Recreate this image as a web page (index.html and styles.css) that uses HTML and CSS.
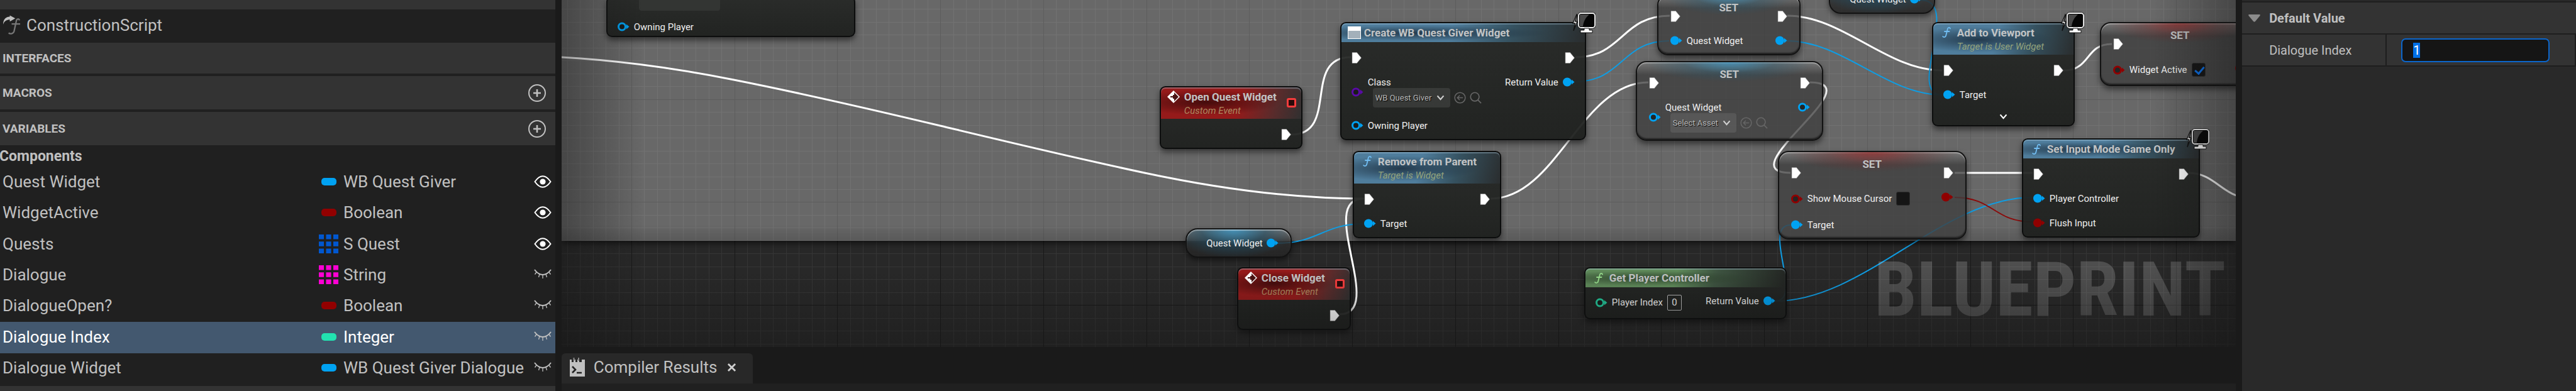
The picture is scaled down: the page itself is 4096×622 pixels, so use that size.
FILE: index.html
```html
<!DOCTYPE html>
<html lang="en">
<head>
<meta charset="utf-8">
<title>Blueprint Editor</title>
<link rel="stylesheet" href="styles.css">
</head>
<body>
<svg class="defs" aria-hidden="true">
  <symbol id="exec" viewBox="0 0 16 18"><path d="M1 .5h7.500l7 8.500-7 8.500H1z" fill="#fff" stroke="#8a8a8a" stroke-width=".6"/></symbol>
  <symbol id="pin" viewBox="0 0 19 15"><circle cx="7" cy="7.500" r="7"/><path d="M14 3.500 18.500 7.500 14 11.500z"/></symbol>
  <symbol id="ring" viewBox="0 0 19 15"><circle cx="7" cy="7.500" r="5.500" fill="#171a19" fill-opacity=".75" stroke="currentColor" stroke-width="3"/><path d="M14 3.500 18.500 7.500 14 11.500z"/></symbol>
  <symbol id="event" viewBox="0 0 20 20"><path d="M10 0 20 10 10 20 0 10z" fill="#fff"/><path d="M11 3 18 10 11 17v-4H8V7h3z" fill="#4a1212"/><path d="M8 5v10" stroke="#fff" stroke-width="2"/><path d="M5 9h5v2H5z" fill="#4a1212"/></symbol>
  <symbol id="func" viewBox="0 0 14 17"><path d="M13 2.500C12.500.5 9.500.2 8.800 3L6.200 13.500C5.600 16.300 2.500 16.800 1.200 15M4 7h7.500" fill="none" stroke="currentColor" stroke-width="1.800" stroke-linecap="round"/></symbol>
  <symbol id="chev" viewBox="0 0 14 10"><path d="M1.500 1.500 7 8l5.500-6.500" fill="none" stroke="currentColor" stroke-width="2.400"/></symbol>
  <symbol id="back" viewBox="0 0 20 20"><g fill="none" stroke="currentColor" stroke-width="1.600"><circle cx="10" cy="10" r="8.800"/><path d="M15 10H6M9.500 6 5.500 10l4 4"/></g></symbol>
  <symbol id="find" viewBox="0 0 20 20"><g fill="none" stroke="currentColor" stroke-width="1.800"><circle cx="8.500" cy="8.500" r="7.200"/><path d="M13.500 13.500 19 19"/></g></symbol>
  <symbol id="client" viewBox="0 0 38 34"><path d="M8 4 2 18h3.500L3 30l6-15H5.500L9 5z" fill="#fff" stroke="#111" stroke-width="1.400"/><rect x="11" y="2" width="26" height="23" rx="4" fill="#050505" stroke="#111" stroke-width="3.500"/><rect x="11" y="2" width="26" height="23" rx="4" fill="#050505" stroke="#f4f4f4" stroke-width="1.800"/><path d="M13 4h15C22 9 19 15 18 23h-5z" fill="#484848"/><path d="M20 26h8v3h5v4H14v-4h6z" fill="#fff" stroke="#111"/></symbol>
  <symbol id="plus" viewBox="0 0 28 28"><g fill="none" stroke="currentColor" stroke-width="2"><circle cx="14" cy="14" r="13"/><path d="M14 8v12M8 14h12" stroke-width="2.600"/></g></symbol>
  <symbol id="eye" viewBox="0 0 28 20"><path d="M1.500 10C6 3.500 10 1.200 14 1.200S22 3.500 26.500 10C22 16.500 18 18.800 14 18.800S6 16.500 1.500 10z" fill="none" stroke="#fff" stroke-width="2"/><circle cx="14" cy="10" r="4.600" fill="#fff"/></symbol>
  <symbol id="lid" viewBox="0 0 28 20"><path d="M1 2C5 7.500 9 10 14 10S23 7.500 27 2" fill="none" stroke="#c0c0c0" stroke-width="2"/><path d="M4 6 1.500 9.500M9 9 7.500 14M14 10v6M19 9l1.500 5M24 6l2.500 3.500" fill="none" stroke="#c0c0c0" stroke-width="1.300"/></symbol>
  <symbol id="array" viewBox="0 0 31 30"><path d="M0 0h8v7.500H0zM11.500 0h8v7.500h-8zM23 0h8v7.500h-8zM0 11.200h8v7.500H0zM11.500 11.200h8v7.500h-8zM23 11.200h8v7.500h-8zM0 22.500h8V30H0zM11.500 22.500h8V30h-8zM23 22.500h8V30h-8z" fill="currentColor"/></symbol>
</svg>

<div class="editor">
  <aside class="blueprint">
    <div class="sliver"></div>
    <div class="script-row">
      <svg class="script-icon" viewBox="0 0 30 32"><path d="M1 15C1 6 6 2 12 2V0l9 5-9 5V7C7 7 3 9 1 15z" fill="#c0c0c0"/><path d="M28 8C27 5 23 5 22.500 10L19 26c-1 4-6 5-9 3M15 14h14" fill="none" stroke="#777" stroke-width="2.400"/></svg>
      <span>ConstructionScript</span>
    </div>
    <h2 class="section section-short">INTERFACES</h2>
    <h2 class="section">MACROS<button class="icon-button" aria-label="Add macro"><svg class="plus"><use href="#plus"/></svg></button></h2>
    <h2 class="section">VARIABLES<button class="icon-button" aria-label="Add variable"><svg class="plus"><use href="#plus"/></svg></button></h2>
    <h3 class="components">Components</h3>
    <ul class="variables">
      <li><span>Quest Widget</span><i class="pill object"></i><span>WB Quest Giver</span><button class="icon-button" aria-label="Hide Quest Widget"><svg class="eye"><use href="#eye"/></svg></button></li>
      <li><span>WidgetActive</span><i class="pill bool"></i><span>Boolean</span><button class="icon-button" aria-label="Hide WidgetActive"><svg class="eye"><use href="#eye"/></svg></button></li>
      <li><span>Quests</span><svg class="array struct"><use href="#array"/></svg><span>S Quest</span><button class="icon-button" aria-label="Hide Quests"><svg class="eye"><use href="#eye"/></svg></button></li>
      <li><span>Dialogue</span><svg class="array string"><use href="#array"/></svg><span>String</span><button class="icon-button" aria-label="Show Dialogue"><svg class="eye"><use href="#lid"/></svg></button></li>
      <li><span>DialogueOpen?</span><i class="pill bool"></i><span>Boolean</span><button class="icon-button" aria-label="Show DialogueOpen?"><svg class="eye"><use href="#lid"/></svg></button></li>
      <li class="selected"><span>Dialogue Index</span><i class="pill int"></i><span>Integer</span><button class="icon-button" aria-label="Show Dialogue Index"><svg class="eye"><use href="#lid"/></svg></button></li>
      <li><span>Dialogue Widget</span><i class="pill object"></i><span>WB Quest Giver Dialogue</span><button class="icon-button" aria-label="Show Dialogue Widget"><svg class="eye"><use href="#lid"/></svg></button></li>
    </ul>
    <div class="foot"></div>
  </aside>

  <main class="center">
    <section class="graph" aria-label="Event graph">
      <svg class="grid" width="100%" height="100%">
        <defs><pattern id="cells" x="111" y="-6" width="655" height="655" patternUnits="userSpaceOnUse">
          <path class="fine" d="M20.500 0v655M41.500 0v655M61.500 0v655M82.500 0v655M102.500 0v655M123.500 0v655M143.500 0v655M184.500 0v655M205.500 0v655M225.500 0v655M246.500 0v655M266.500 0v655M287.500 0v655M307.500 0v655M348.500 0v655M368.500 0v655M389.500 0v655M409.500 0v655M430.500 0v655M450.500 0v655M471.500 0v655M512.500 0v655M532.500 0v655M553.500 0v655M573.500 0v655M594.500 0v655M614.500 0v655M635.500 0v655"/>
          <path class="fine" d="M0 20.500h655M0 41.500h655M0 61.500h655M0 82.500h655M0 102.500h655M0 123.500h655M0 143.500h655M0 184.500h655M0 205.500h655M0 225.500h655M0 246.500h655M0 266.500h655M0 287.500h655M0 307.500h655M0 348.500h655M0 368.500h655M0 389.500h655M0 409.500h655M0 430.500h655M0 450.500h655M0 471.500h655M0 512.500h655M0 532.500h655M0 553.500h655"/>
          <path class="bold" d="M.5 0v655M164.500 0v655M327.500 0v655M491.500 0v655M0 .5h655M0 164.500h655M0 327.500h655M0 491.500h655"/>
        </pattern></defs>
        <rect width="100%" height="100%" fill="url(#cells)"/>
      </svg>
      <div class="comment"></div>
      <svg class="wires" viewBox="893 0 2663 552" fill="none">
        <g stroke="#fff" stroke-width="3">
          <path d="M893 91C984 96 1076 109 1167 127S1386 174 1495 200 1712 252 1820 275 2053 316 2169 316"/>
          <path d="M2053 214C2130 214 2070 91 2148 91"/>
          <path d="M2505 91C2580 91 2578 25 2655 25"/>
          <path d="M2842 25C2930 25 3000 112 3088 112"/>
          <path d="M2370 316C2475 316 2514 131 2621 131"/>
          <path d="M2878 131C2980 131 2745 275 2847 275"/>
          <path d="M3281 112C3325 112 3315 70 3358 70"/>
          <path d="M3108 275H3232"/>
          <path d="M3480 275C3515 275 3530 302 3556 311"/>
          <path d="M2130 500C2205 500 2092 316 2168 316"/>
        </g>
        <g stroke="#0f9de3" stroke-width="2">
          <path d="M2504 130C2580 130 2578 65 2654 65"/>
          <path d="M2841 65C2930 65 3000 151 3088 151"/>
          <path d="M2032 387C2095 387 2105 356 2168 356"/>
          <path d="M3054 0C3120 0 3030 151 3088 151"/>
          <path d="M2822 479C2965 479 3088 314 3232 314"/>
          <path d="M2822 479C2870 479 2800 358 2847 358"/>
        </g>
        <path d="M3108 314C3170 314 3170 353 3232 353" stroke="#8b0a0a" stroke-width="2"/>
      </svg>

      <article class="node n-partial">
        <div class="partial-field"></div>
        <div class="row"><svg class="pin obj"><use href="#ring"/></svg>Owning Player</div>
      </article>

      <article class="node n-open">
        <header class="head event"><svg class="event-icon"><use href="#event"/></svg><div><h4>Open Quest Widget</h4><em>Custom Event</em></div><i class="delegate"></i></header>
        <div class="body"><div class="outs"><div class="row"><svg class="exec"><use href="#exec"/></svg></div></div></div>
      </article>

      <article class="node n-create">
        <header class="head call"><i class="widget-icon"></i><h4>Create WB Quest Giver Widget</h4></header>
        <svg class="client"><use href="#client"/></svg>
        <div class="body">
          <div class="ins">
            <div class="row"><svg class="exec"><use href="#exec"/></svg></div>
            <div class="asset">
              <svg class="pin cls"><use href="#ring"/></svg>
              <div><label for="cls">Class</label>
                <div class="picker"><span class="drop"><select id="cls"><option>WB Quest Giver</option></select><svg class="chev"><use href="#chev"/></svg></span><button class="icon-button dim" aria-label="Use selected"><svg class="tool"><use href="#back"/></svg></button><button class="icon-button dim" aria-label="Browse"><svg class="tool"><use href="#find"/></svg></button></div></div>
            </div>
            <div class="row"><svg class="pin obj"><use href="#ring"/></svg>Owning Player</div>
          </div>
          <div class="outs"><div class="row"><svg class="exec"><use href="#exec"/></svg></div><div class="row">Return Value<svg class="pin obj"><use href="#pin"/></svg></div></div>
        </div>
      </article>

      <article class="node n-remove">
        <header class="head call"><svg class="func"><use href="#func"/></svg><div><h4>Remove from Parent</h4><em>Target is Widget</em></div></header>
        <div class="body">
          <div class="ins"><div class="row"><svg class="exec"><use href="#exec"/></svg></div><div class="row"><svg class="pin obj"><use href="#pin"/></svg>Target</div></div>
          <div class="outs"><div class="row"><svg class="exec"><use href="#exec"/></svg></div></div>
        </div>
      </article>

      <article class="node var n-var">Quest Widget<svg class="pin obj"><use href="#pin"/></svg></article>

      <article class="node n-close">
        <header class="head event"><svg class="event-icon"><use href="#event"/></svg><div><h4>Close Widget</h4><em>Custom Event</em></div><i class="delegate"></i></header>
        <div class="body"><div class="outs"><div class="row"><svg class="exec"><use href="#exec"/></svg></div></div></div>
      </article>

      <article class="node set blue n-set1">
        <h4>SET</h4>
        <div class="body">
          <div class="ins"><div class="row"><svg class="exec"><use href="#exec"/></svg></div><div class="row"><svg class="pin obj"><use href="#pin"/></svg>Quest Widget</div></div>
          <div class="outs"><div class="row"><svg class="exec"><use href="#exec"/></svg></div><div class="row"><svg class="pin obj"><use href="#pin"/></svg></div></div>
        </div>
      </article>

      <article class="node set blue n-set2">
        <h4>SET</h4>
        <div class="body">
          <div class="ins"><div class="row"><svg class="exec"><use href="#exec"/></svg></div>
            <div class="asset">
              <svg class="pin obj"><use href="#ring"/></svg>
              <div><label for="asset">Quest Widget</label>
                <div class="picker"><span class="drop drop-small"><select id="asset"><option>Select Asset</option></select><svg class="chev"><use href="#chev"/></svg></span><button class="icon-button dim" aria-label="Use selected"><svg class="tool"><use href="#back"/></svg></button><button class="icon-button dim" aria-label="Browse"><svg class="tool"><use href="#find"/></svg></button></div></div>
            </div>
          </div>
          <div class="outs"><div class="row"><svg class="exec"><use href="#exec"/></svg></div><div class="row"><svg class="pin obj"><use href="#ring"/></svg></div></div>
        </div>
      </article>

      <article class="node var n-var2">Quest Widget<svg class="pin obj"><use href="#pin"/></svg></article>

      <article class="node n-add">
        <header class="head call"><svg class="func"><use href="#func"/></svg><div><h4>Add to Viewport</h4><em>Target is User Widget</em></div></header>
        <svg class="client"><use href="#client"/></svg>
        <div class="body">
          <div class="ins"><div class="row"><svg class="exec"><use href="#exec"/></svg></div><div class="row"><svg class="pin obj"><use href="#pin"/></svg>Target</div></div>
          <div class="outs"><div class="row"><svg class="exec"><use href="#exec"/></svg></div></div>
        </div>
        <button class="icon-button expand" aria-label="Show more pins"><svg class="chev"><use href="#chev"/></svg></button>
      </article>

      <article class="node set red n-set4">
        <h4>SET</h4>
        <div class="body">
          <div class="ins"><div class="row"><svg class="exec"><use href="#exec"/></svg></div><div class="row tall"><svg class="pin boolean"><use href="#ring"/></svg><label for="active">Widget Active</label><input type="checkbox" id="active" checked></div></div>
          <div class="outs"><div class="row"><svg class="exec"><use href="#exec"/></svg></div><div class="row"><svg class="pin boolean"><use href="#pin"/></svg></div></div>
        </div>
      </article>

      <article class="node set red n-set3">
        <h4>SET</h4>
        <div class="body">
          <div class="ins"><div class="row"><svg class="exec"><use href="#exec"/></svg></div><div class="row tall"><svg class="pin boolean"><use href="#ring"/></svg><label for="cursor">Show Mouse Cursor</label><input type="checkbox" id="cursor"></div><div class="row"><svg class="pin obj"><use href="#pin"/></svg>Target</div></div>
          <div class="outs"><div class="row"><svg class="exec"><use href="#exec"/></svg></div><div class="row"><svg class="pin boolean"><use href="#pin"/></svg></div></div>
        </div>
      </article>

      <article class="node n-input">
        <header class="head call"><svg class="func"><use href="#func"/></svg><h4>Set Input Mode Game Only</h4></header>
        <svg class="client"><use href="#client"/></svg>
        <div class="body">
          <div class="ins"><div class="row"><svg class="exec"><use href="#exec"/></svg></div><div class="row"><svg class="pin obj"><use href="#pin"/></svg>Player Controller</div><div class="row"><svg class="pin boolean"><use href="#pin"/></svg>Flush Input</div></div>
          <div class="outs"><div class="row"><svg class="exec"><use href="#exec"/></svg></div></div>
        </div>
      </article>

      <article class="node n-get">
        <header class="head pure"><svg class="func"><use href="#func"/></svg><h4>Get Player Controller</h4></header>
        <div class="body">
          <div class="ins"><div class="row tall"><svg class="pin integer"><use href="#ring"/></svg><label for="pidx">Player Index</label><input class="number" id="pidx" value="0"></div></div>
          <div class="outs"><div class="row">Return Value<svg class="pin obj"><use href="#pin"/></svg></div></div>
        </div>
      </article>

      <div class="watermark">BLUEPRINT</div>
      <div class="vignette"></div>
    </section>

    <nav class="tabs">
      <div class="tab">
        <svg class="log-icon" viewBox="0 0 24 30"><path d="M0 3h3v4h3V3h3v4h3V3h3v4h4V3h5v27H0z" fill="#c0c0c0"/><path d="M6.500 0v5M14 0v5" stroke="#888" stroke-width="2"/><path d="M4 14l5 5-5 5M11 24h8" fill="none" stroke="#222" stroke-width="2.600"/></svg>
        <span>Compiler Results</span>
        <button class="icon-button close" aria-label="Close tab"><svg viewBox="0 0 14 14"><path d="M1 1l12 12M13 1 1 13" stroke="#d0d0d0" stroke-width="3"/></svg></button>
      </div>
    </nav>
    <div class="results"></div>
  </main>

  <aside class="details">
    <h2 class="category"><svg class="tri" viewBox="0 0 19 12"><path d="M1 0h17c1 0 1 1 .5 2L11 11q-1.500 1.500-3 0L.5 2C0 1 0 0 1 0z" fill="#8c8c8c"/></svg>Default Value</h2>
    <div class="property"><label for="index">Dialogue Index</label><div class="value"><input id="index" value="1"></div></div>
  </aside>
</div>
<script src="app.js"></script>
</body>
</html>
```
FILE: styles.css
```css
* { box-sizing: border-box; }
html, body { height: 100%; }
body {
  margin: 0;
  overflow: hidden;
  background: #1a1a1a;
  color: #c0c0c0;
  font-family: Roboto, "Liberation Sans", sans-serif;
  font-size: 26px;
}
h2, h3, h4, ul { margin: 0; padding: 0; }
input, select, button { font-family: inherit; color: inherit; }
svg { display: block; flex: none; overflow: visible; }
.defs { position: absolute; width: 0; height: 0; }
.icon-button { padding: 0; border: 0; background: none; display: block; }

.editor {
  display: grid;
  grid-template-columns: 883fr 2663fr 531fr;
  column-gap: 10px;
  height: 100vh;
}

/* Left panel */
.blueprint { display: flex; flex-direction: column; background: #202020; min-width: 0; }
.sliver { height: 15px; background: #333; }
.script-row { display: flex; align-items: center; gap: 9px; height: 53px; padding: 0 4px 4px; }
.script-icon { width: 29px; height: 32px; }
.section {
  display: flex; align-items: center; justify-content: space-between;
  height: 53px; margin-bottom: 4px; padding: 0 15px 0 4px;
  background: #333; font-size: 19px; font-weight: 700;
}
.section-short { height: 49px; }
.plus { width: 28px; height: 28px; }
.components { margin-top: -4px; padding-top: 4px; height: 34px; font-size: 23px; line-height: 28px; font-weight: 700; text-indent: -1px; }
.variables { flex: 1; display: flex; flex-direction: column; list-style: none; }
.variables li {
  flex: 1; display: grid; align-items: center;
  grid-template-columns: 495px 31px 1fr 28px;
  column-gap: 8px; padding: 0 6px 2px 4px; white-space: nowrap;
}
.variables li.selected { background: #43586f; color: #fff; }
.pill { justify-self: center; width: 24px; height: 12px; border-radius: 5px; }
.pill.object { background: #00a2f2; }
.pill.bool { background: #920000; }
.pill.int { background: #22e2b0; }
.array { width: 31px; height: 30px; }
.struct { color: #0057d0; }
.string { color: #ff00d4; }
.eye { width: 28px; height: 20px; }
.foot { height: 8px; margin-top: 3px; background: #333; }

/* Centre */
.center { display: flex; flex-direction: column; min-width: 0; }
.graph { position: relative; flex: 1; overflow: hidden; background: #282828; color: #f0f0f0; font-size: 15px; }
.grid { position: absolute; inset: 0; }
.fine { stroke: #353535; }
.bold { stroke: #181818; }
.comment {
  position: absolute; inset: 0 0 auto; height: 383px;
  background: linear-gradient(transparent 357px, rgba(0,0,0,.14)), rgba(255,255,255,.3);
  border-bottom: 1px solid #6a6a6a;
  box-shadow: 0 3px 10px rgba(0,0,0,.7);
}
.wires { position: absolute; left: 0; top: 0; width: 2663px; height: 552px; }
.vignette {
  position: absolute; inset: 0; pointer-events: none;
  background:
    linear-gradient(90deg, rgba(20,20,20,.4), transparent 130px),
    linear-gradient(270deg, rgba(20,20,20,.4), transparent 130px),
    linear-gradient(0deg, rgba(20,20,20,.4), transparent 120px);
}
.watermark {
  position: absolute; right: 16px; bottom: 20px;
  font-family: "Roboto Condensed", "Open Sans Condensed", Roboto, sans-serif;
  font-weight: 700; font-size: 121px; line-height: 142px;
  color: rgba(255,255,255,.18);
}

/* Nodes */
.node {
  position: absolute; display: flex; flex-direction: column;
  border: 2px solid #0c0d0d; border-radius: 9px;
  background: linear-gradient(rgba(38,40,38,.94), rgba(30,32,30,.95));
  box-shadow: 0 5px 10px rgba(0,0,0,.5);
}
.node h4 { font-size: 17px; line-height: 20px; font-weight: 700; color: #c2c4c5; white-space: nowrap; }
.node em { display: block; font-size: 15px; line-height: 24px; white-space: nowrap; }
.head {
  display: flex; align-items: center; gap: 7px; height: 30px; padding: 0 10px;
  border-radius: 7px 7px 0 0;
  box-shadow: inset 0 2px 1px rgba(190,220,240,.35);
}
.head:has(em) { height: 50px; align-items: flex-start; padding-top: 5px; }
.event { background: radial-gradient(ellipse at 32% 48%, rgba(55,10,10,.85), transparent 55%), linear-gradient(105deg, #951a1a 55%, #5a2b2b 80%, #303030); }
.event em { color: #b08a60; }
.call { background: radial-gradient(ellipse at 32% 52%, rgba(28,46,62,.85), transparent 55%), linear-gradient(105deg, #4f7d9c 45%, #35515f 70%, #2a2d2e); }
.call em { color: #94a37c; }
.pure { background: radial-gradient(ellipse at 30% 52%, rgba(42,62,40,.85), transparent 55%), linear-gradient(105deg, #5f8a5a 45%, #3d5340 65%, #222422); }
.func { width: 14px; height: 17px; margin: 1px 3px 0 4px; color: #71bdf2; }
.pure .func { color: #97dd8c; }
.event-icon { width: 20px; height: 20px; }
.widget-icon { width: 21px; height: 20px; margin-right: -2px; border: 1px solid #fff; background: linear-gradient(#fff 6px, #a3b0ba 6px); }
.delegate { width: 15px; height: 15px; margin: 12px -2px 0 auto; border: 3px solid #f43c3c; border-radius: 3px; background: #2a0a0a; }
.client { position: absolute; right: -17px; top: -18px; width: 38px; height: 34px; }
.body { display: flex; justify-content: space-between; padding: 5px 16px 2px; }
.n-get .body { padding: 2px 16px 3px; }
.outs { margin-left: auto; }
.row { display: flex; align-items: center; gap: 7px; height: 39px; white-space: nowrap; }
.row.tall { height: 44px; }
.outs .row { justify-content: flex-end; }
.exec { width: 16px; height: 18px; }
.pin { width: 19px; height: 15px; fill: currentColor; }
.obj { color: #00a2f2; }
.cls { color: #5a0aa8; }
.boolean { color: #8f0000; }
.integer { color: #22c79a; }
.asset { display: flex; gap: 7px; height: 69px; padding-top: 10px; }
.asset .pin { margin-top: 18px; }
.asset label { display: block; height: 19px; line-height: 20px; }
.picker { display: flex; align-items: center; gap: 6px; margin-left: 8px; }
.drop { position: relative; width: 123px; height: 31px; border-radius: 4px; background: rgba(255,255,255,.09); }
.drop-small { width: 105px; }
.drop select { display: block; width: 100%; height: 31px; padding: 0 0 0 4px; border: 0; background: none; appearance: none; font-size: 13px; color: #b8b8b8; text-shadow: 1px 1px 1px #000; }
.drop .chev { position: absolute; right: 9px; top: 11px; pointer-events: none; }
.chev { width: 13px; height: 9px; color: #d0d0d0; }
.tool { width: 19px; height: 19px; }
.dim { color: #666; }
.expand { align-self: center; height: 27px; }
.expand .chev { color: #fff; }
.node input[type=checkbox] { appearance: none; position: relative; width: 22px; height: 22px; margin: 0; border: 1px solid #2c2c2c; border-radius: 3px; background: #151515; }
.node input[type=checkbox]:checked::after { content: ""; position: absolute; left: 7px; top: 2px; width: 6px; height: 12px; border: solid #0b70e8; border-width: 0 3px 3px 0; transform: rotate(40deg); }
.number { width: 23px; height: 25px; padding: 0; border: 1px solid #b8b8b8; border-radius: 2px; background: none; font-size: 15px; text-align: center; }

.set, .var { border-radius: 17px; border-color: #131313; background: rgba(62,62,62,.78); }
.set { display: grid; box-shadow: inset 0 2px 1px rgba(255,255,255,.4), inset 0 -2px 2px #222, 0 5px 10px rgba(0,0,0,.5); }
.set > * { grid-area: 1 / 1; }
.set h4 { height: 34px; padding-top: 9px; text-align: center; border-radius: 15px 15px 0 0; }
.set .body { padding: 13px 19px 2px; }
.blue h4 { background: radial-gradient(ellipse at 50% 0, rgba(60,150,195,.75), rgba(35,90,115,.35) 35%, transparent 65%), linear-gradient(rgba(190,190,190,.4), transparent 20px); }
.red h4 { background: radial-gradient(ellipse at 50% 0, rgba(150,40,40,.75), rgba(110,40,40,.35) 35%, transparent 65%), linear-gradient(rgba(190,190,190,.4), transparent 20px); }
.var {
  flex-direction: row; align-items: center; justify-content: flex-end; gap: 6px;
  height: 47px; width: 169px; padding-right: 19px; border-radius: 19px;
  background: radial-gradient(ellipse at 45% 0, rgba(60,150,195,.85), rgba(30,80,105,.55) 40%, transparent 75%), linear-gradient(rgba(130,130,130,.7), rgba(45,45,45,.85) 22px, rgba(35,35,35,.85));
  box-shadow: inset 0 2px 1px rgba(255,255,255,.4), 0 4px 8px rgba(0,0,0,.5);
}

/* Places of the nodes on the graph */
.n-partial { left: 71px; top: -6px; width: 396px; height: 65px; padding: 0 16px; justify-content: flex-end; }
.n-partial .row { height: 41px; }
.partial-field { width: 129px; height: 30px; margin-left: 34px; border-radius: 4px; background: #333533; margin-bottom: 11px; }
.n-open { left: 951px; top: 137px; width: 227px; }
.n-create { left: 1238px; top: 35px; width: 391px; }
.n-remove { left: 1258px; top: 240px; width: 236px; }
.n-var { left: 992px; top: 363px; }
.n-close { left: 1074px; top: 425px; width: 181px; }
.n-set1 { left: 1742px; top: -9px; width: 228px; }
.n-set2 { left: 1708px; top: 97px; width: 298px; }
.n-var2 { left: 2015px; top: -25px; }
.n-add { left: 2179px; top: 35px; width: 227px; }
.n-set4 { left: 2446px; top: 35px; width: 255px; }
.n-set3 { left: 1934px; top: 240px; width: 300px; }
.n-input { left: 2322px; top: 220px; width: 283px; }
.n-get { left: 1626px; top: 425px; width: 322px; }

/* Compiler results tab */
.tabs { display: flex; align-items: flex-end; height: 58px; background: #1a1a1a; }
.tab { display: flex; align-items: center; height: 48px; padding: 0 27px 4px 13px; border-radius: 6px 6px 0 0; background: #282828; }
.log-icon { width: 24px; height: 30px; margin-right: 14px; }
.close { margin-left: 17px; }
.close svg { width: 13px; height: 13px; }
.results { height: 12px; background: #202020; }

/* Details */
.details { background: #292929; border-top: 2px solid #292929; min-width: 0; }
.category { display: flex; align-items: center; gap: 14px; height: 53px; padding: 0 10px; border: solid #1e1e1e; border-width: 2px 0; background: #333; font-size: 20px; font-weight: 700; }
.tri { width: 19px; height: 12px; }
.property { display: grid; grid-template-columns: 228px 1fr; gap: 2px; border-bottom: 2px solid #1e1e1e; border-right: 2px solid #1e1e1e; background: #1e1e1e; font-size: 20px; }
.property label { display: flex; align-items: center; height: 49px; padding-left: 43px; background: #333; }
.value { display: flex; align-items: center; padding: 0 40px 0 23px; background: #333; }
.value input { width: 100%; height: 38px; padding: 0 17px; border: 2px solid #0b66cc; border-radius: 7px; outline: 0; background: #151515; color: #fff; font-size: 20px; }
.value input::selection { background: #0070e8; color: #fff; }
```
FILE: app.js
```js
const field = document.getElementById("index");
field.focus();
field.select();
```
